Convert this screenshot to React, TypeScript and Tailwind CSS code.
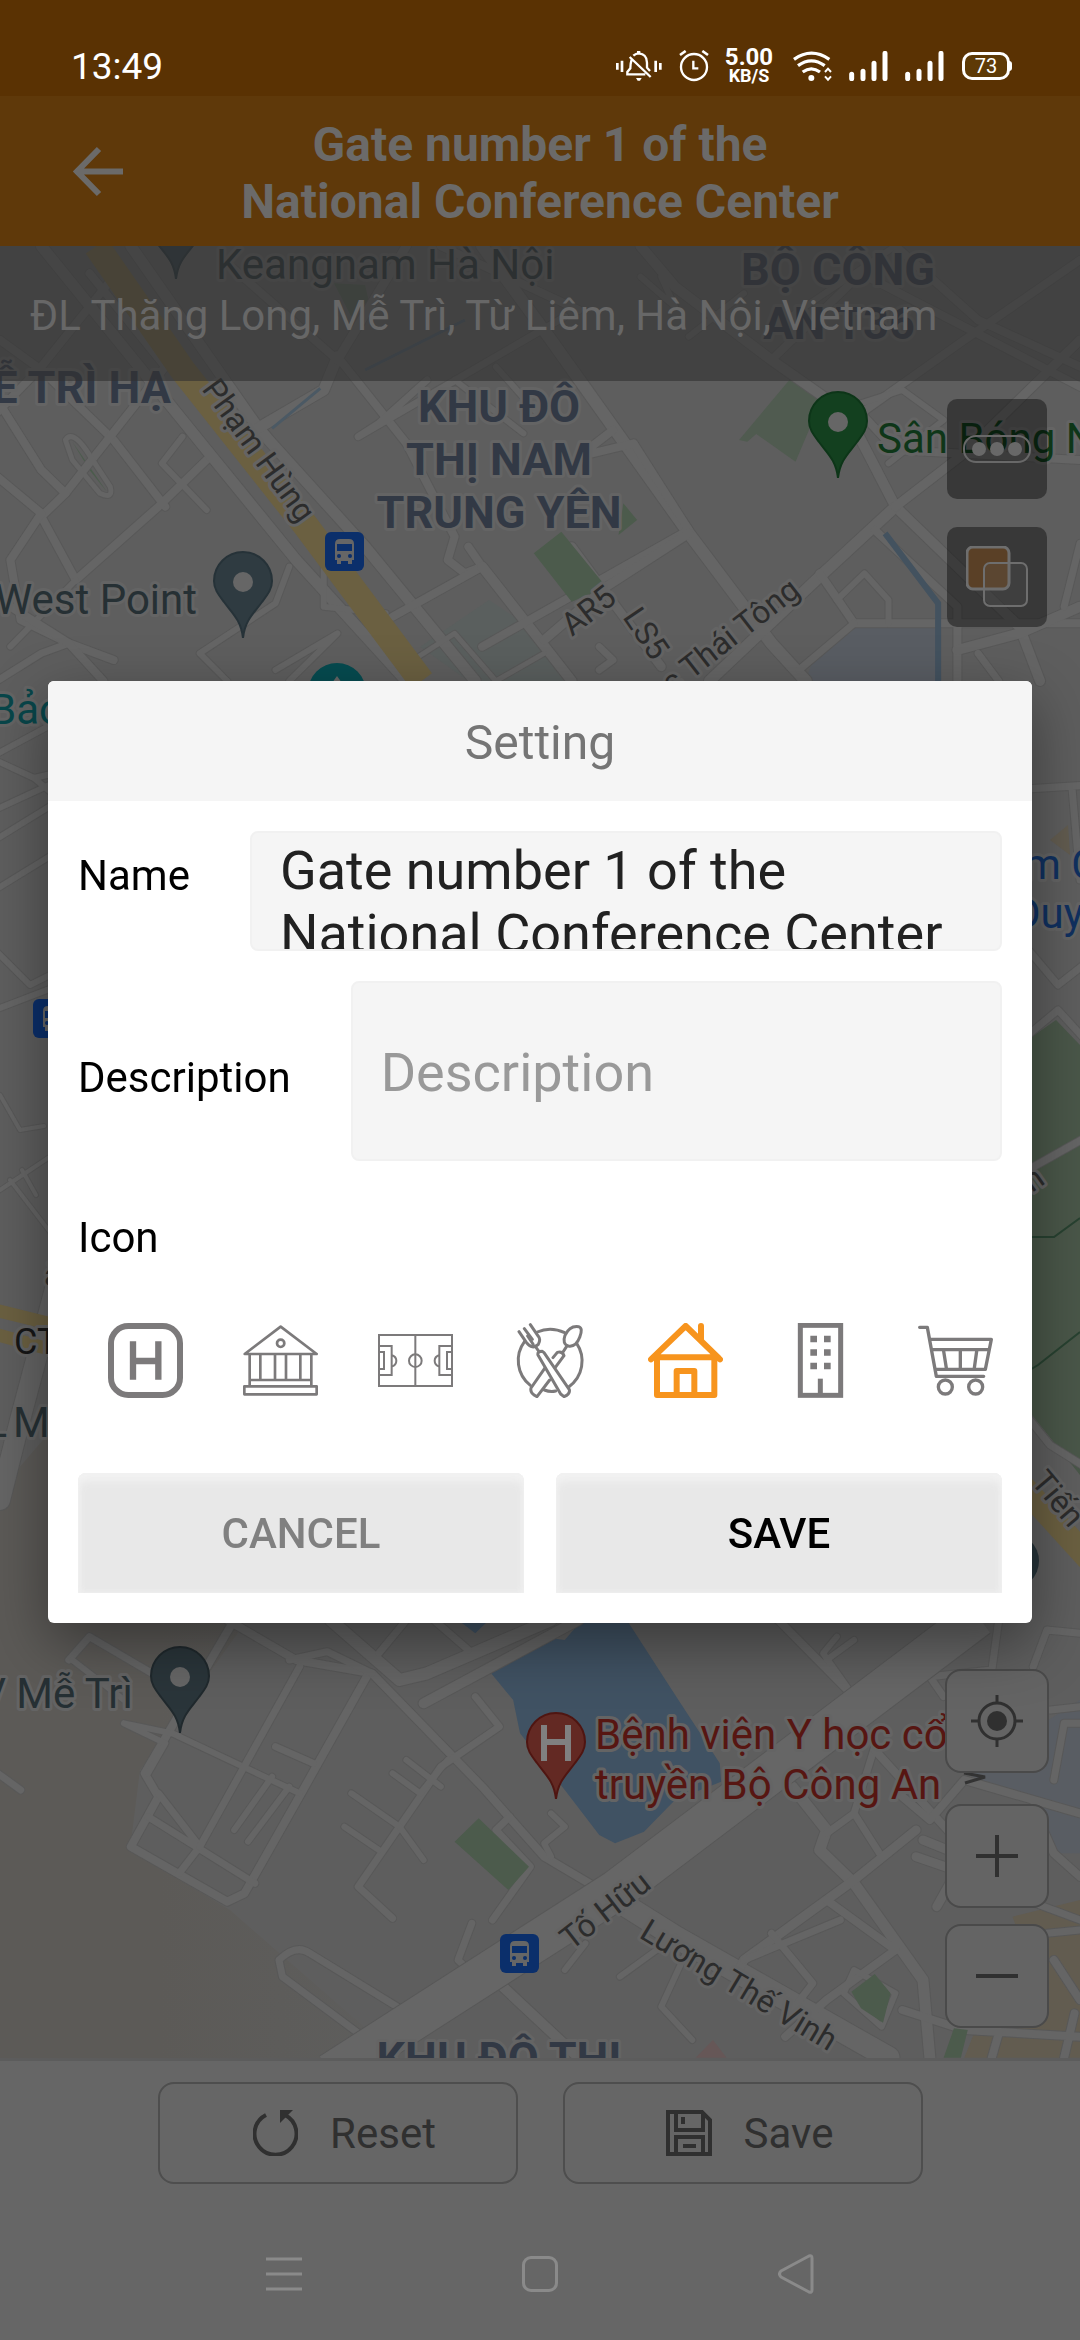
import { useState } from "react";
import type { ReactNode } from "react";

type Road = { d: string; w: number };

/* Road geometry is stored on a 1568-wide, triple-height survey grid. */
const NORTH_ROADS: Road[] = [
  { d: "M0 -60L60 30L165 240L240 440", w: 10 },
  { d: "M165 -250L60 20L-10 170", w: 10 },
  { d: "M-10 100L60 330L95 400L240 20L130 -260", w: 10 },
  { d: "M95 400L60 470L110 660L230 440L300 300", w: 10 },
  { d: "M-10 340L60 460L15 600L30 780L100 850L165 900", w: 10 },
  { d: "M110 660L15 860", w: 8 },
  { d: "M-10 970L60 880L100 850", w: 9 },
  { d: "M95 240Q105 210 125 270L160 380Q165 420 145 400L105 300Z", w: 7 },
  { d: "M265 230L235 310L300 450", w: 8 },
  { d: "M0 720L100 850L150 963", w: 10 },
  { d: "M60 -342L300 270L430 600L590 963", w: 13 },
  { d: "M190 -342L370 190L390 240L530 560L690 963", w: 13 },
  { d: "M490 -10L470 90L370 210", w: 13 },
  { d: "M490 -10L590 250L660 530L650 600L675 640L700 620L680 560", w: 10 },
  { d: "M700 620L570 770", w: 10 },
  { d: "M700 620L830 963", w: 12 },
  { d: "M700 -342L800 -60L1000 520L1120 850L1170 963", w: 14 },
  { d: "M590 -342L490 0", w: 11 },
  { d: "M490 0L330 -290", w: 10 },
  { d: "M840 -150L640 -342", w: 10 },
  { d: "M820 -130L520 230L550 190L620 60", w: 9 },
  { d: "M890 210L840 290L920 250L1000 510L700 860", w: 10 },
  { d: "M830 560L880 700L960 920", w: 11 },
  { d: "M1000 520L880 680L790 840", w: 11 },
  { d: "M870 860L890 900L870 930", w: 9 },
  { d: "M930 -342L980 -220L1120 0L1230 160L1300 440L1480 800L1510 963", w: 12 },
  { d: "M1300 440L1190 650L1030 963", w: 13 },
  { d: "M1300 440L1400 280L1568 -60", w: 11 },
  { d: "M1190 640L1240 790L1568 790", w: 10 },
  { d: "M1240 790L1160 930", w: 9 },
  { d: "M1270 510L1390 740L1390 963", w: 10 },
  { d: "M1120 0L1250 -260L1568 80", w: 10 },
  { d: "M1300 -342L1420 -120L1568 20", w: 10 },
  { d: "M1568 -300L1400 -60L1250 160L1300 270L1568 300", w: 10 },
  { d: "M1250 130L1310 90L1370 180L1290 310", w: 8 },
  { d: "M1390 870L1480 820L1568 740", w: 12 },
  { d: "M1215 720L1255 640L1290 720L1290 790", w: 8 },
  { d: "M400 930L490 820L420 963", w: 8 },
  { d: "M420 620L400 730L290 880L330 963", w: 8 },
  { d: "M470 620L470 740L560 760", w: 8 },
  { d: "M600 900L660 820L720 963M720 963L790 880", w: 7 },
  { d: "M720 20L780 160M660 60L760 220", w: 8 },
  { d: "M1420 880L1450 963M1568 550L1545 740", w: 9 },
  { d: "M930 -250L980 -160L960 -250M1080 -200L1000 -70M1140 -120L1300 -342", w: 8 },
];

const SOUTH_ROADS: Road[] = [
  { d: "M330 60L430 180L540 220L700 560L790 770L880 880", w: 10 },
  { d: "M340 60L210 520L230 590L190 740L330 905L355 880L440 570L535 220", w: 10 },
  { d: "M215 650L370 850M230 580L290 740L260 820", w: 9 },
  { d: "M250 400L435 580M340 690L395 530M360 725L420 560", w: 8 },
  { d: "M435 200L290 740", w: 9 },
  { d: "M100 180L130 110L270 280", w: 9 },
  { d: "M180 370L240 430L215 520M180 370L250 400M105 180L180 300", w: 8 },
  { d: "M400 440L455 490M420 180L475 155L540 220", w: 9 },
  { d: "M480 60L580 240L620 220L800 60", w: 14 },
  { d: "M590 60L550 160M630 60L680 150", w: 9 },
  { d: "M615 310L840 60", w: 12 },
  { d: "M690 290L725 380L640 500L520 860L570 955", w: 9 },
  { d: "M590 480L640 560M510 580L580 680L615 780M500 680L550 750M570 520L610 580L650 480", w: 8 },
  { d: "M740 650L720 690L770 800L715 960", w: 9 },
  { d: "M800 640L820 680L790 730L800 770", w: 8 },
  { d: "M685 970L665 1080L700 1150", w: 9 },
  { d: "M730 1160L840 1373", w: 12 },
  { d: "M600 1250L450 1060Q430 1030 405 1080L410 1130L540 1330", w: 9 },
  { d: "M880 880L980 1010L1290 1373", w: 24 },
  { d: "M980 1010L900 1130M850 1030L820 1110", w: 8 },
  { d: "M1000 1040L960 1220L1005 1320", w: 8 },
  { d: "M1130 60L1240 290L1180 420", w: 10 },
  { d: "M1215 110L1195 160L1240 290M1240 120L1200 180", w: 8 },
  { d: "M1450 60L1440 210L1350 230L1370 290", w: 9 },
  { d: "M1150 560L1200 690L1190 750L1240 850L1340 1140L1350 1373", w: 13 },
  { d: "M1270 440L1240 640L1200 700M1240 640L1280 770", w: 9 },
  { d: "M1330 690L1240 840L1080 1080L1070 1120", w: 11 },
  { d: "M1270 450L1380 700M1200 900L1300 1050L1200 1200L1140 1310", w: 10 },
  { d: "M1120 1000L1180 1150L1150 1230M1220 960L1080 1080", w: 9 },
  { d: "M1240 1110L1300 1180L1280 1280L1225 1180Z", w: 8 },
  { d: "M1340 720L1400 770M1330 770L1400 820M1360 920L1390 810", w: 11 },
  { d: "M1500 200L1520 90L1568 100M1525 330L1568 320M1530 540L1545 370L1568 370", w: 9 },
  { d: "M1310 590L1350 660L1400 540L1568 640M1500 620L1530 760L1568 830", w: 10 },
  { d: "M1310 1230L1400 1290L1568 1310M1450 1300L1440 1373M1530 1080L1568 1200M1560 1240L1545 1373", w: 10 },
  { d: "M1490 900L1568 960M1520 1000L1568 990", w: 9 },
  { d: "M-10 510L30 570", w: 9 },
];

const SIDE_ROADS: Road[] = [
  { d: "M-5 755L60 720M-5 760L34 778L60 800M-5 810L60 780M34 778L60 772", w: 8 },
  { d: "M-5 840L60 800M-5 890L60 850M-5 950L30 985L60 970M-5 1010L60 985", w: 8 },
  { d: "M0 1095L20 1130L44 1126M0 1190L60 1150M10 1180L60 1245M22 1170L36 1195", w: 6 },
  { d: "M60 1270L20 1420L0 1500", w: 22 },
  { d: "M1010 790L1090 785M1072 788L1080 880M1020 940L1058 985L1090 960", w: 9 },
  { d: "M1010 1180L1090 1135M1010 1050L1058 1010L1090 1045M1010 1395L1050 1445L1090 1470", w: 9 },
];

function RoadSet({ roads }: { roads: Road[] }) {
  return (
    <g fill="none" strokeLinejoin="round" strokeLinecap="round">
      {roads.map((r) => (
        <path key={"c" + r.d} d={r.d} stroke="#585858" strokeWidth={r.w} vectorEffect="non-scaling-stroke" />
      ))}
      {roads.map((r) => (
        <path key={r.d} d={r.d} stroke="#656565" strokeWidth={r.w - 2} vectorEffect="non-scaling-stroke" />
      ))}
    </g>
  );
}

function Pin({ x, y, fill, edge, children }: { x: number; y: number; fill: string; edge: string; children?: ReactNode }) {
  return (
    <g transform={`translate(${x} ${y})`}>
      <path
        d="M0 0C-2 -18 -11 -25 -19 -36C-25 -44 -29 -49 -29 -57A29 29 0 0 1 29 -57C29 -49 25 -44 19 -36C11 -25 2 -18 0 0Z"
        fill={fill}
        stroke={edge}
        strokeWidth="2"
      />
      {children ?? <circle cy="-56" r="10" fill="#666" />}
    </g>
  );
}

function BusStop({ x, y }: { x: number; y: number }) {
  return (
    <g transform={`translate(${x} ${y})`}>
      <rect width="39" height="39" rx="6" fill="#0b2f6b" />
      <path d="M10 12Q10 7 15 7H24Q29 7 29 12V28H27V32H23V29H16V32H12V28H10Z" fill="#666" />
      <rect x="12" y="12" width="15" height="7" fill="#0b2f6b" />
      <circle cx="14" cy="24" r="2" fill="#0b2f6b" />
      <circle cx="25" cy="24" r="2" fill="#0b2f6b" />
    </g>
  );
}

function MapCanvas() {
  const grid = "scale(0.68878 0.33333)";
  return (
    <svg
      className="absolute inset-0 h-full w-full"
      viewBox="0 246 1080 1812"
      preserveAspectRatio="xMidYMin slice"
      role="img"
      aria-label="Map"
      fontFamily="Roboto, sans-serif"
    >
      <defs>
        <linearGradient id="west" x1="0" x2="1">
          <stop offset="0.4" stopColor="#5c5a57" />
          <stop offset="1" stopColor="#5e5e5d" />
        </linearGradient>
      </defs>
      <rect y="246" width="1080" height="1812" fill="#5e5e5e" />
      <path d="M0 1490L60 1420L240 1630L140 1770L130 1850L230 1910L400 2058H0Z" fill="url(#west)" />
      <g transform={`translate(0 360) ${grid}`}>
        <path d="M1150 50L1195 110L1155 305L1098 222L1085 245L1073 240Z" fill="#505b50" />
        <path d="M485 -230L530 -225L535 -180L510 -130Z" fill="#505b50" />
        <path d="M610 860L710 720L790 830L830 963H680Z" fill="#5a5f5e" />
        <path d="M1180 900L1240 800H1360V963H1170Z" fill="#595d63" />
        <path d="M105 245L155 395L130 330Z" fill="#4b5c4c" />
      </g>
      <g transform={`translate(0 1600) ${grid}`}>
        <path d="M1400 520L1568 300V760L1520 760L1500 600Z" fill="#595d63" />
        <path d="M1470 950L1568 900V1373H1400L1420 1270L1520 1230Z" fill="#625c50" />
      </g>
      <path d="M1020 1045L1056 1020L1080 1045V1475L1020 1400Z" fill="#4a5749" />
      <path d="M1020 1237H1054L1080 1218M1020 1376L1038 1365L1080 1332" stroke="#284231" strokeWidth="2" fill="none" />
      <path d="M1050 840L1068 825L1070 855Z" fill="#625c50" />

      <g transform={`translate(0 360) ${grid}`}>
        <RoadSet roads={NORTH_ROADS} />
        <path d="M675 -120L530 30M465 85L395 205" fill="none" stroke="#4b5964" strokeWidth="3" vectorEffect="non-scaling-stroke" />
        <path d="M1285 520L1362 730V963" fill="none" stroke="#43525f" strokeWidth="6" vectorEffect="non-scaling-stroke" />
        <path d="M140 -342L265 30L445 500L612 963" fill="none" stroke="#6b6041" strokeWidth="26" vectorEffect="non-scaling-stroke" />
        <path d="M815 515L880 680L830 725L775 580ZM905 430L925 480L898 525Z" fill="#4c5b4c" />
      </g>
      <RoadSet roads={SIDE_ROADS} />
      <g fill="none" stroke="#6b6041">
        <path d="M-5 1310L60 1326M-5 1334L60 1352" strokeWidth="13" />
        <path d="M1015 1478L1095 1566" strokeWidth="24" />
      </g>
      <g transform={`translate(0 1600) ${grid}`}>
        <path
          d="M845 60L820 120L795 113L765 145L713 220L745 300L755 400L820 570L870 705L893 730L935 695L980 600L1047 545L1045 490L985 300L910 60ZM665 60H710L690 100Z"
          fill="#405263"
        />
        <RoadSet roads={SOUTH_ROADS} />
        <path d="M1420 50L895 870L480 1420" fill="none" stroke="#585858" strokeWidth="42" vectorEffect="non-scaling-stroke" />
        <path d="M1420 50L895 870L480 1420" fill="none" stroke="#666" strokeWidth="40" vectorEffect="non-scaling-stroke" />
        <path d="M695 655L768 800L738 870L660 725ZM1270 1122L1293 1180L1282 1268L1250 1225L1236 1175ZM1385 1285L1405 1290L1395 1373H1370Z" fill="#4c5b4c" />
        <path d="M1035 1320L1055 1373H1010Z" fill="#665757" />
      </g>

      <Pin x={176} y={279} fill="#2f3b41" edge="#263238" />
      <Pin x={838} y={478} fill="#13401f" edge="#0d3518" />
      <Pin x={243} y={638} fill="#2f3b41" edge="#263238" />
      <Pin x={180} y={1733} fill="#2a353a" edge="#20292d" />
      <Pin x={556} y={1799} fill="#632923" edge="#4f1511">
        <path d="M-12 -74V-38M12 -74V-38M-12 -57H12" stroke="#808080" strokeWidth="6" />
      </Pin>
      <circle cx="337" cy="692" r="29" fill="#064b50" />
      <path d="M337 676L347 690H327Z" fill="#666" />
      <circle cx="1011" cy="1561" r="28" fill="#27343a" />
      <BusStop x={325} y={532} />
      <BusStop x={33} y={999} />
      <BusStop x={500} y={1934} />

      <g stroke="#646464" strokeWidth="6" strokeLinejoin="round" paintOrder="stroke">
        <g fill="#263034" fontSize="42">
          <text x="216" y="279">Keangnam Hà Nội</text>
          <text x="197" y="614" textAnchor="end">West Point</text>
          <text x="133" y="1708" textAnchor="end">V Mễ Trì</text>
          <text x="7" y="1437" textAnchor="end">L</text>
          <text x="13" y="1437">M</text>
        </g>
        <g fill="#323945" fontSize="45" fontWeight="700" textAnchor="middle">
          <text x="838" y="285">BỘ CÔNG</text>
          <text x="839" y="339">AN T36</text>
          <text x="171" y="403" textAnchor="end">Ễ TRÌ HẠ</text>
          <text x="499" y="422">KHU ĐÔ</text>
          <text x="499" y="475">THỊ NAM</text>
          <text x="499" y="528">TRUNG YÊN</text>
          <text x="499" y="2074">KHU ĐÔ THỊ</text>
        </g>
        <g fontSize="42">
          <text x="877" y="453" fill="#0e3618">Sân Bóng N</text>
          <text x="-10" y="724" fill="#08464a">Bảo</text>
          <text x="1024" y="879" fill="#10305f">m C</text>
          <text x="1013" y="928" fill="#10305f">Duy</text>
          <g fill="#571612">
            <text x="595" y="1749">Bệnh viện Y học cổ</text>
            <text x="595" y="1799">truyền Bộ Công An</text>
          </g>
        </g>
        <g fill="#2c2c2c" fontSize="32">
          <text transform="translate(201 389) rotate(54)">Phạm Hùng</text>
          <text transform="translate(572 637) rotate(-38)">AR5</text>
          <text transform="translate(622 617) rotate(56)">LS5</text>
          <text transform="translate(672 695) rotate(-38)">c Thái Tông</text>
          <text transform="translate(571 1951) rotate(-38)">Tố Hữu</text>
          <text transform="translate(638 1937) rotate(31)">Lương Thế Vinh</text>
          <text transform="translate(1030 1482) rotate(50)">Tiến</text>
          <text transform="translate(1032 1193) rotate(-35)">n</text>
          <text x="44" y="1286">ă</text>
          <text x="14" y="1354" fill="#161616" fontSize="36">CT</text>
        </g>
      </g>
      <path d="M964 1773L985 1777L965 1783" fill="none" stroke="#333" strokeWidth="3" />
    </svg>
  );
}

function SignalBars() {
  return (
    <svg className="h-[30px] w-[39px]" viewBox="743 93 117 90" stroke="#fff" strokeWidth="15" strokeLinecap="round" aria-hidden="true">
      <path d="M751 163V176M785 154V176M818 130V176M851 100V176" />
    </svg>
  );
}

function StatusBar() {
  return (
    <div className="flex h-24 items-center justify-between bg-[#5a3203] pl-[71px] pr-[70px] pt-9 text-white">
      <span className="text-[37px] leading-none">13:49</span>
      <div className="flex items-center">
        <svg className="mr-[17px] h-[32px] w-[46px]" viewBox="50 90 138 96" fill="none" stroke="#fff" strokeWidth="7" aria-hidden="true">
          <path d="M54 129V149M68 122V156M169 122V156M183 129V149" strokeWidth="8" />
          <path d="M97 119Q93 130 93 145L84 156V163H138M102 107Q110 100 118 100Q143 102 143 128V143L152 153M91 111L154 171" />
          <path d="M118 93V101" strokeWidth="10" />
          <path d="M110 174H127L122 182H115Z" fill="#fff" stroke="none" />
        </svg>
        <svg className="mr-4 h-[32px] w-[30px]" viewBox="237 92 90 96" fill="none" stroke="#fff" strokeWidth="7" aria-hidden="true">
          <circle cx="282" cy="143" r="39" />
          <path d="M240 107L257 95M324 107L307 95" strokeWidth="8" />
          <path d="M280 124V147H295" />
        </svg>
        <div className="mr-5 flex w-12 flex-col items-center font-bold">
          <span className="text-[24px] leading-[20px]">5.00</span>
          <span className="text-[18px] leading-[18px]">KB/S</span>
        </div>
        <svg className="mr-4 h-[31px] w-[40px]" viewBox="578 92 120 93" fill="none" stroke="#fff" strokeWidth="10" aria-hidden="true">
          <path d="M581 117Q633 80 687 117M593 136Q633 107 673 136M607 155Q633 136 659 155" />
          <circle cx="633" cy="173" r="9" fill="#fff" stroke="none" />
          <path d="M674 155L683 145L692 155M674 168L683 178L692 168" strokeWidth="6" />
        </svg>
        <SignalBars />
        <span className="w-[17px]" />
        <SignalBars />
        <div className="relative ml-[18px] flex h-7 w-12 items-center justify-center rounded-[10px] border-[3px] border-white bg-[#5e3a06] text-[20px] leading-none">
          73
          <span className="absolute -right-[5px] h-[10px] w-[3px] rounded-r bg-white" />
        </div>
      </div>
    </div>
  );
}

const PLACE_ICONS: { name: string; box: string; art: ReactNode }[] = [
  {
    name: "Hospital",
    box: "54 69 225 225",
    art: (
      <>
        <rect x="63" y="78" width="207" height="207" rx="52" strokeWidth="18" />
        <path d="M129 124V239M205 124V239M129 183H205" strokeWidth="19" />
      </>
    ),
  },
  {
    name: "Bank",
    box: "459 69 225 225",
    art: (
      <g strokeWidth="8" strokeLinejoin="round">
        <path d="M464 162L572 80L680 162Z" />
        <circle cx="572" cy="130" r="11" />
        <path d="M479 162V258M511 162V240M555 162V240M588 162V240M631 162V240M664 162V258M479 240H664" />
        <rect x="463" y="259" width="217" height="24" />
      </g>
    ),
  },
  {
    name: "Stadium",
    box: "864 69 225 225",
    art: (
      <g strokeWidth="6">
        <path d="M867 105H1086V258H867ZM976 105V258" />
        <circle cx="976" cy="182" r="19" />
        <path d="M867 138H905V225H867M867 156H882V207H867M905 165Q919 170 919 182Q919 195 905 200" />
        <path d="M1086 138H1048V225H1086M1086 156H1071V207H1086M1048 165Q1034 170 1034 182Q1034 195 1048 200" />
      </g>
    ),
  },
  {
    name: "Restaurant",
    box: "40 69 225 225",
    art: (
      <g strokeWidth="9" strokeLinecap="round" strokeLinejoin="round">
        <path d="M113 96Q153 78 195 98M75 124A95 95 0 0 0 92 256M231 130A95 95 0 0 1 208 260M134 270Q152 277 168 273" />
        <path d="M58 95L80 127Q98 151 116 133Q124 118 116 109L92 74M74 86L98 118M84 108L100 132M106 138L116 152" />
        <path d="M237 80Q251 84 240 112Q229 142 206 138Q187 132 196 106Q210 76 237 80ZM201 139L190 156" />
        <path d="M115 165Q112 154 128 154L133 158L209 269Q212 282 193 290L183 282Z" />
        <path d="M160 173L173 157Q188 153 193 167L167 202M135 205L94 264Q90 280 112 290L150 240" />
      </g>
    ),
  },
  {
    name: "Home",
    box: "444 69 225 225",
    art: (
      <g strokeWidth="18" strokeLinecap="round" strokeLinejoin="round">
        <path d="M453 178L557 78L660 178M603 78V118M466 172H648M471 174V285H643V174M530 282V213H583V282" />
      </g>
    ),
  },
  {
    name: "Building",
    box: "849 69 225 225",
    art: (
      <>
        <rect x="901" y="76" width="121" height="210" strokeWidth="15" />
        <path d="M941 107V209M982 107V209" strokeWidth="20" strokeDasharray="20 20.5" />
        <path d="M961 236V286" strokeWidth="15" />
      </>
    ),
  },
  {
    name: "Shop",
    box: "1254 69 225 225",
    art: (
      <g strokeWidth="10" strokeLinecap="round" strokeLinejoin="round">
        <path d="M1259 82H1282L1309 229H1451M1291 118H1474L1456 208H1306M1297 149H1467M1331 154L1339 204M1381 154V204M1430 154L1423 204" />
        <circle cx="1336" cy="261" r="21" />
        <circle cx="1427" cy="261" r="21" />
      </g>
    ),
  },
];

const fieldClass =
  "min-w-0 flex-1 resize-none overflow-hidden rounded-lg border-2 border-[#f1f1f1] bg-[#f5f5f5] px-7 text-[54px] leading-[63px] outline-none";
const dialogButton =
  "h-[120px] rounded-t-lg bg-[#e8e8e8] pt-0.5 shadow-[inset_0_8px_8px_#f2f2f2,inset_0_0_6px_#f2f2f2]";

function SettingDialog() {
  const [selected, setSelected] = useState("Home");
  return (
    <div className="pointer-events-none fixed inset-x-0 bottom-9 top-0 z-10 flex items-center justify-center px-12">
      <section
        role="dialog"
        aria-labelledby="setting-title"
        className="pointer-events-auto w-full overflow-hidden rounded-md bg-white shadow-[0_20px_60px_rgba(0,0,0,0.4)]"
      >
        <h2 id="setting-title" className="bg-[#f5f5f5] pb-[30px] pt-[34px] text-center text-[48px] leading-[56px] text-[#757575]">
          Setting
        </h2>
        <form className="flex flex-col p-[30px] text-black" onSubmit={(e) => e.preventDefault()}>
          <div className="flex gap-[60px]">
            <label htmlFor="name" className="pt-5 text-[42px] leading-[49px]">
              Name
            </label>
            <textarea
              id="name"
              className={`${fieldClass} h-[120px] pt-1.5 text-[#212121]`}
              defaultValue="Gate number 1 of the National Conference Center"
            />
          </div>
          <div className="mt-[30px] flex gap-[60px]">
            <label htmlFor="description" className="pt-[72px] text-[42px] leading-[49px]">
              Description
            </label>
            <textarea
              id="description"
              className={`${fieldClass} h-[180px] pt-[58px] placeholder:text-[#999]`}
              placeholder="Description"
            />
          </div>
          <h3 className="mt-[52px] text-[42px] leading-[49px]">Icon</h3>
          <div className="mt-[31px] flex overflow-hidden">
            {PLACE_ICONS.map((icon) => (
              <button
                key={icon.name}
                type="button"
                aria-label={icon.name}
                aria-pressed={selected === icon.name}
                onClick={() => setSelected(icon.name)}
                className={
                  selected === icon.name
                    ? "flex h-[135px] w-[135px] shrink-0 items-center justify-center text-[#f7941d]"
                    : "flex h-[135px] w-[135px] shrink-0 items-center justify-center text-[#7c7a7b]"
                }
              >
                <svg className="h-[75px] w-[75px]" viewBox={icon.box} fill="none" stroke="currentColor" aria-hidden="true">
                  {icon.art}
                </svg>
              </button>
            ))}
          </div>
          <div className="mt-[45px] grid grid-cols-2 gap-8 text-[42px] font-medium leading-[48px]">
            <button type="button" className={`${dialogButton} text-[#808080]`}>
              CANCEL
            </button>
            <button type="submit" className={`${dialogButton} text-black`}>
              SAVE
            </button>
          </div>
        </form>
      </section>
    </div>
  );
}

const zoomButton =
  "flex h-[104px] w-[104px] items-center justify-center rounded-2xl border-2 border-[#4a4a4a] bg-[#646464]";
const toolButton = "flex h-[100px] w-[100px] items-center justify-center rounded-[10px] bg-black/40";
const footerButton =
  "flex h-[102px] w-[360px] items-center justify-center gap-8 rounded-2xl border-2 border-[#4e4e4e] pl-3.5 text-[42px]";

export default function App() {
  return (
    <div className="flex min-h-screen flex-col bg-[#666] font-[Roboto,sans-serif]">
      <StatusBar />
      <header className="relative flex min-h-[150px] items-center justify-center bg-[#5f390a] text-[#6b6a69]">
        <button type="button" aria-label="Back" className="absolute left-[72px]">
          <svg className="h-[51px] w-[52px]" viewBox="0 0 52 51" fill="none" stroke="currentColor" strokeWidth="6" aria-hidden="true">
            <path d="M27 3L5 25.500L27 48M5 25.500H51" />
          </svg>
        </button>
        <h1 className="w-[640px] pt-1 text-center text-[48px] font-bold leading-[57px]">
          Gate number 1 of the National Conference Center
        </h1>
      </header>

      <main className="relative flex flex-1 flex-col overflow-hidden border-b-[3px] border-[#5c5c5c]">
        <MapCanvas />
        <p className="relative min-h-[135px] bg-[#303030]/60 px-[30px] pt-[45px] text-[42px] leading-[49px] text-[#676767]">
          ĐL Thăng Long, Mễ Trì, Từ Liêm, Hà Nội, Vietnam
        </p>
        <div className="relative flex flex-1 flex-col items-end justify-between pb-[30px] pr-[31px] pt-[18px]">
          <div className="mr-0.5 flex flex-col gap-7">
            <button type="button" aria-label="More" className={toolButton}>
              <svg className="h-7 w-[68px]" viewBox="0 0 68 28" fill="#686868" aria-hidden="true">
                <rect x="1" y="1" width="66" height="26" rx="12" fill="none" stroke="#686868" strokeWidth="2" />
                <circle cx="16" cy="14" r="7" />
                <circle cx="34" cy="14" r="7" />
                <circle cx="52" cy="14" r="7" />
              </svg>
            </button>
            <button type="button" aria-label="Layers" className={toolButton}>
              <svg className="h-[62px] w-[62px]" viewBox="0 0 62 62" stroke="#6e6e6e" aria-hidden="true">
                <rect x="1" y="1" width="42" height="42" rx="6" fill="#5a4026" strokeWidth="3" />
                <rect x="18" y="17" width="43" height="43" rx="6" fill="#666" fillOpacity="0.18" strokeWidth="2" />
              </svg>
            </button>
          </div>
          <div className="flex flex-col">
            <button type="button" aria-label="My location" className={zoomButton}>
              <svg className="h-[52px] w-[52px]" viewBox="0 0 52 52" fill="none" stroke="#303030" strokeWidth="3" aria-hidden="true">
                <circle cx="26" cy="26" r="18" />
                <circle cx="26" cy="26" r="10" fill="#303030" stroke="none" />
                <path d="M26 0V8M26 44V52M0 26H8M44 26H52" />
              </svg>
            </button>
            <button type="button" aria-label="Zoom in" className={`${zoomButton} mt-[31px]`}>
              <svg className="h-[42px] w-[42px]" viewBox="0 0 42 42" stroke="#303030" strokeWidth="4" aria-hidden="true">
                <path d="M0 21H42M21 0V42" />
              </svg>
            </button>
            <button type="button" aria-label="Zoom out" className={`${zoomButton} mt-4`}>
              <svg className="h-[42px] w-[42px]" viewBox="0 0 42 42" stroke="#303030" strokeWidth="4" aria-hidden="true">
                <path d="M0 21H42" />
              </svg>
            </button>
          </div>
        </div>
      </main>

      <div className="flex justify-center gap-[45px] pb-6 pt-[21px] text-[#303030]">
        <button type="button" className={footerButton}>
          <svg className="h-[46px] w-[45px]" viewBox="0 0 45 46" fill="none" stroke="currentColor" strokeWidth="4" aria-hidden="true">
            <path d="M13 5A21 21 0 1 0 32 5" />
            <path d="M27 0H40L27 13Z" fill="currentColor" stroke="none" />
          </svg>
          Reset
        </button>
        <button type="button" className={footerButton}>
          <svg className="h-[46px] w-[46px]" viewBox="0 0 46 46" fill="none" stroke="currentColor" strokeWidth="4" aria-hidden="true">
            <path d="M2 2H36L44 10V44H2Z" />
            <path d="M10 2V20H37V3M10 44V27H37V44" />
            <path d="M17 7V14M17 36H30" />
          </svg>
          Save
        </button>
      </div>

      <nav className="flex h-[132px] items-center justify-center gap-[220px] text-[#8a8a8a]">
        <button type="button" aria-label="Recent apps">
          <svg className="h-[34px] w-9" viewBox="0 0 36 34" stroke="currentColor" strokeWidth="3" aria-hidden="true">
            <path d="M0 2H36M0 17H36M0 32H36" />
          </svg>
        </button>
        <button type="button" aria-label="Home" className="h-9 w-9 rounded-[9px] border-[3px] border-current" />
        <button type="button" aria-label="Go back">
          <svg className="h-10 w-9" viewBox="0 0 36 40" fill="none" stroke="currentColor" strokeWidth="3" strokeLinejoin="round" aria-hidden="true">
            <path d="M3 17Q0 20 3 23L31 38Q34 39 34 36V4Q34 1 31 2Z" />
          </svg>
        </button>
      </nav>

      <SettingDialog />
    </div>
  );
}
